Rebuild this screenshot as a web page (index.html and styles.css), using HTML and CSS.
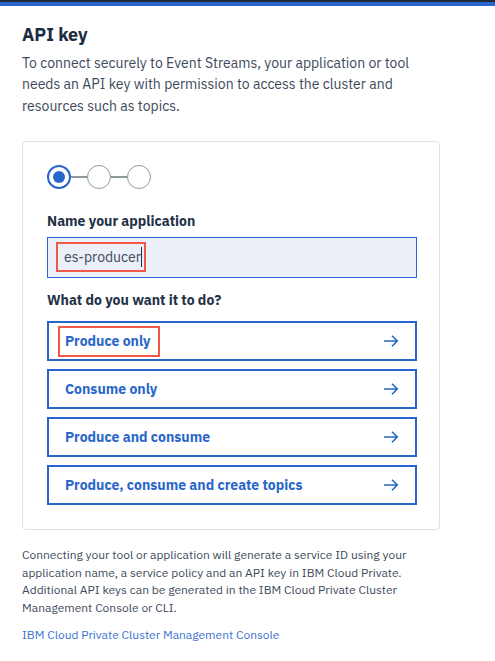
FILE: index.html
```html
<!DOCTYPE html>
<html lang="en">
<head>
<meta charset="utf-8">
<title>API key</title>
<link rel="stylesheet" href="styles.css">
</head>
<body>
<div class="topbar"><div class="topbar-dark"></div><div class="topbar-blue"></div></div>
<main class="page">
  <h1 class="title">API key</h1>
  <p class="intro">To connect securely to Event Streams, your application or tool needs an API key with permission to access the cluster and resources such as topics.</p>

  <section class="card">
    <div class="stepper">
      <span class="step step-active"><span class="step-dot"></span></span>
      <span class="step-line"></span>
      <span class="step"></span>
      <span class="step-line"></span>
      <span class="step"></span>
    </div>

    <label class="label" for="appname">Name your application</label>
    <div class="input">
      <span class="input-text highlight-box">es-producer<span class="cursor"></span></span>
    </div>

    <div class="label label-second">What do you want it to do?</div>
    <div class="options">
      <button class="option"><span class="option-text highlight">Produce only</span><svg class="arrow" viewBox="0 0 16 16" width="16" height="16"><path d="M1 8H14.5M9 2.8L14.3 8L9 13.2" fill="none" stroke="currentColor" stroke-width="1.6"/></svg></button>
      <button class="option"><span class="option-text">Consume only</span><svg class="arrow" viewBox="0 0 16 16" width="16" height="16"><path d="M1 8H14.5M9 2.8L14.3 8L9 13.2" fill="none" stroke="currentColor" stroke-width="1.6"/></svg></button>
      <button class="option"><span class="option-text">Produce and consume</span><svg class="arrow" viewBox="0 0 16 16" width="16" height="16"><path d="M1 8H14.5M9 2.8L14.3 8L9 13.2" fill="none" stroke="currentColor" stroke-width="1.6"/></svg></button>
      <button class="option"><span class="option-text">Produce, consume and create topics</span><svg class="arrow" viewBox="0 0 16 16" width="16" height="16"><path d="M1 8H14.5M9 2.8L14.3 8L9 13.2" fill="none" stroke="currentColor" stroke-width="1.6"/></svg></button>
    </div>
  </section>

  <p class="note">Connecting your tool or application will generate a service ID using your application name, a service policy and an API key in IBM Cloud Private. Additional API keys can be generated in the IBM Cloud Private Cluster Management Console or CLI.</p>
  <a class="link" href="#">IBM Cloud Private Cluster Management Console</a>
</main>
</body>
</html>
```
FILE: styles.css
```css
* { box-sizing: border-box; }
html, body { margin: 0; padding: 0; background: #ffffff; }
body {
  font-family: "IBM Plex Sans", "Noto Sans", "Liberation Sans", sans-serif;
  color: #3d4a5b;
}
.topbar-dark { height: 2px; background: #1e2a3a; }
.topbar-blue { height: 4px; background: #2866cc; }

.page { padding: 0 22px; }

.title {
  margin: 17px 0 0;
  font-size: 18px;
  line-height: 24px;
  font-weight: 700;
  color: #1d2c42;
}
.intro {
  margin: 6px 0 0;
  width: 400px;
  font-size: 14px;
  line-height: 21.3px;
  color: #3d4a5b;
}

.card {
  margin-top: 24px;
  width: 418px;
  border: 1px solid #dde3ea;
  border-radius: 4px;
  padding: 23px 23px 24px 24px;
}

.stepper { display: flex; align-items: center; height: 24px; }
.step {
  width: 24px; height: 24px;
  border-radius: 50%;
  border: 1.5px solid #8d9a9b;
  display: flex; align-items: center; justify-content: center;
}
.step-active { border: 2px solid #2866cc; }
.step-dot { width: 12px; height: 12px; border-radius: 50%; background: #2866cc; }
.step-line { width: 16px; height: 2px; background: #8d9a9b; }

.label {
  display: block;
  margin-top: 23px;
  font-size: 14px;
  line-height: 18px;
  font-weight: 700;
  color: #243247;
}
.label-second { margin-top: 13px; }

.input {
  margin-top: 7px;
  height: 41px;
  width: 370px;
  background: #eaeff8;
  border: 1px solid #2866cc;
  padding-left: 16px;
  display: flex; align-items: center;
}
.input-text {
  position: relative;
  font-size: 14px;
  color: #3d4a5b;
  display: inline-flex; align-items: center;
}
.cursor {
  display: inline-block;
  width: 1px; height: 20px;
  background: #1d2c42;
  margin-left: 0;
}
.highlight-box::after {
  content: "";
  position: absolute;
  left: -8px; right: -4px; top: -5px; bottom: -5px;
  border: 2px solid #f0584a;
}

.options {
  margin-top: 12px;
  display: flex; flex-direction: column; gap: 8px;
}
.option {
  width: 370px; height: 40px;
  border: 2px solid #2866cc;
  background: #ffffff;
  padding: 0 16px 0 16px;
  display: flex; align-items: center; justify-content: space-between;
  font-family: inherit;
  font-size: 14px;
  font-weight: 700;
  color: #2a67c9;
  text-align: left;
  cursor: pointer;
}
.option-text { position: relative; }
.highlight::after {
  content: "";
  position: absolute;
  left: -7px; right: -9px; top: -6px; bottom: -7px;
  border: 2px solid #f0584a;
}
.arrow { color: #2a67c9; }

.note {
  margin: 16px 0 0;
  width: 395px;
  font-size: 12px;
  line-height: 17.8px;
  color: #3d4a5b;
}
.link {
  display: inline-block;
  margin-top: 9px;
  font-size: 12px;
  line-height: 17px;
  color: #3b72cf;
  text-decoration: none;
}
```
